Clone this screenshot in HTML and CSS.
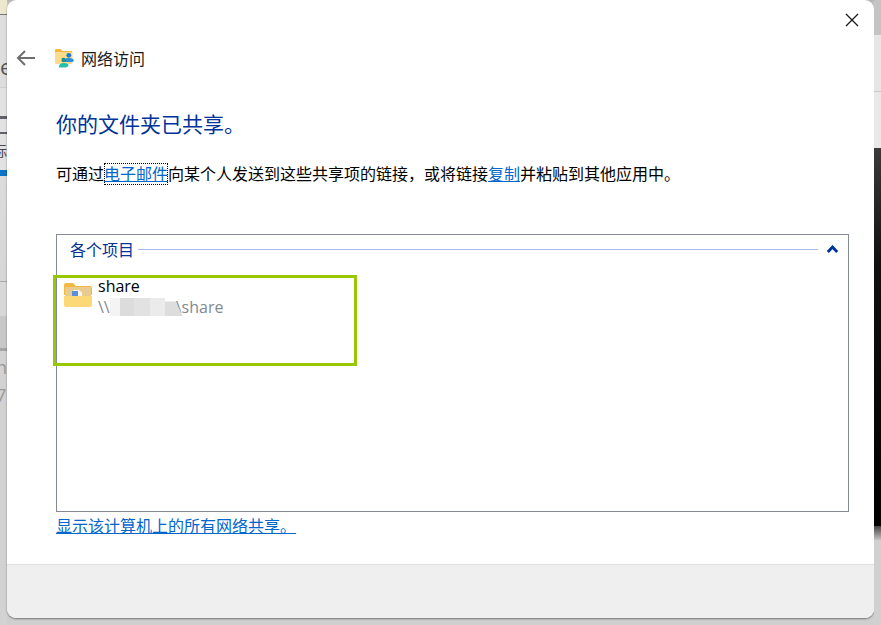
FILE: index.html
```html
<!DOCTYPE html>
<html lang="zh-CN">
<head>
    <meta charset="UTF-8">
    <title>网络访问</title>
    <link rel="stylesheet" href="styles.css">
</head>
<body>
    <div class="desktop">
        <div class="strip strip-left">
            <div class="band band-top"></div>
            <div class="band band-e"><span>e</span></div>
            <div class="band band-bars"></div>
            <div class="band band-char"><span>标</span></div>
            <div class="band band-blue"></div>
            <div class="band band-light"></div>
            <div class="band band-light2"></div>
            <div class="band band-mid"></div>
            <div class="band band-low"><span>n</span><span>7</span></div>
        </div>

        <div class="dialog">
            <div class="close-row">
                <svg class="close-icon" width="14" height="14" viewBox="0 0 14 14">
                    <path d="M1 1L13 13M13 1L1 13" stroke="#1a1a1a" stroke-width="1.3" fill="none"/>
                </svg>
            </div>
            <div class="nav">
                <svg class="back-icon" width="20" height="18" viewBox="0 0 20 18">
                    <path d="M9 2L2 9L9 16M2 9H19" stroke="#6e6e6e" stroke-width="2" fill="none"/>
                </svg>
                <svg class="nav-icon" width="20" height="20" viewBox="0 0 20 20">
                    <path d="M1 2Q1 1 2 1H6.500L8.500 3H18V5H1Z" fill="#f4b93c"/>
                    <path d="M1 4H18.500V14Q18.500 16 17 16H2.500Q1 16 1 14.500Z" fill="#fcdc8a"/>
                    <circle cx="14.800" cy="7.300" r="2.400" fill="#1f78d1"/>
                    <path d="M9.500 13.500Q9.500 10 14.800 10Q19.800 10 19.800 12.500Q19.800 14 17.500 14H11Z" fill="#2a8fd8"/>
                    <circle cx="9.600" cy="12" r="2.200" fill="#1f8f8f"/>
                    <path d="M5 19.500Q4.500 15 9.800 15Q15 15 14.500 17.500Q14 19.500 11 19.500Z" fill="#25bfae"/>
                </svg>
                <span class="nav-title">网络访问</span>
            </div>

            <div class="content">
                <h1 class="heading">你的文件夹已共享。</h1>
                <p class="intro">可通过<a class="link link-focus" href="#">电子邮件</a>向某个人发送到这些共享项的链接，或将链接<a class="link" href="#">复制</a>并粘贴到其他应用中。</p>

                <div class="group">
                    <div class="group-head">
                        <span class="group-title">各个项目</span>
                        <span class="group-line"></span>
                        <svg class="chevron" width="11" height="8" viewBox="0 0 11 8">
                            <path d="M0.800 7L5.500 2L10.200 7" stroke="#003399" stroke-width="2.800" fill="none"/>
                        </svg>
                    </div>
                    <div class="item">
                        <svg class="folder" width="28" height="24" viewBox="0 0 28 24">
                            <path d="M0 2Q0 0 2 0H9L12 3H26Q28 3 28 5V12H0Z" fill="#f3b744"/>
                            <rect x="1" y="4" width="26" height="10" fill="#e9cb8e"/>
                            <path d="M9 7H15L18 9.500V13H9Z" fill="#f7f4ea"/>
                            <rect x="8" y="8" width="6" height="5" fill="#5b8fe0"/>
                            <path d="M0 13H28V22Q28 24 26 24H2Q0 24 0 22Z" fill="#fdd877"/>
                        </svg>
                        <div class="item-text">
                            <div class="item-name">share</div>
                            <div class="item-path">\\<span class="redact"><i class="r1"></i><i class="r2"></i><i class="r3"></i><i class="r4"></i><i class="r5"></i></span>\share</div>
                        </div>
                    </div>
                    <div class="highlight"></div>
                </div>

                <a class="link link-all" href="#">显示该计算机上的所有网络共享。</a>
            </div>

            <div class="footer"></div>
        </div>

        <div class="strip strip-right">
            <div class="band r-top"></div>
            <div class="band r-light"></div>
            <div class="band r-light2"></div>
            <div class="band r-dark"></div>
            <div class="band r-fade"></div>
            <div class="band r-low"></div>
        </div>
    </div>
</body>
</html>
```

FILE: styles.css
```css
html, body {
    margin: 0;
    padding: 0;
}
body {
    font-family: "Open Sans", "Noto Sans CJK SC", sans-serif;
    font-size: 16px;
    background-color: #c6c6c6;
    color: #000;
    overflow: hidden;
}
.desktop {
    display: flex;
    width: 881px;
    height: 625px;
    overflow: hidden;
    background: linear-gradient(#b4b4b4, #cfcfcf 5px);
}
.strip {
    width: 7px;
    flex: none;
    height: 625px;
    display: flex;
    flex-direction: column;
    overflow: hidden;
}
.band {
    flex: none;
    overflow: hidden;
    line-height: 1;
}
.band-top {
    height: 14px;
    background-color: #ece8cf;
    border-bottom: 1px solid #777;
}
.band-e {
    height: 72px;
    padding-top: 40px;
    box-sizing: border-box;
    background-color: #dedede;
    color: #555;
    font-size: 22px;
}
.band-bars {
    height: 47px;
    box-sizing: border-box;
    background-color: #e2e2e2;
    border-top: 1px solid #cfcfcf;
    background-image: linear-gradient(#60606a, #60606a), linear-gradient(#60606a, #60606a);
    background-size: 100% 3px, 100% 3px;
    background-position: 0 28px, 0 44px;
    background-repeat: no-repeat;
}
.band-char {
    height: 36px;
    box-sizing: border-box;
    padding-top: 10px;
    background-color: #e2e2e2;
    color: #445;
    font-size: 14px;
}
.band-char span {
    display: block;
    margin-left: -7px;
}
.band-blue {
    height: 6px;
    background-color: #0a72c8;
}
.band-light {
    height: 105px;
    background: linear-gradient(#dcdcdc, #d6d6d6);
    border-bottom: 1px solid #aaa;
}
.band-light2 {
    height: 34px;
    background-color: #d8d8d8;
}
.band-mid {
    height: 32px;
    background-color: #c8c8c8;
}
.band-low {
    height: 100%;
    border-top: 3px solid #a4a4a4;
    padding-top: 7px;
    background-color: #d2d2d2;
    color: #999;
    font-size: 18px;
}
.band-low span {
    display: block;
    margin-bottom: 10px;
    margin-left: -4px;
}

.dialog {
    width: 867px;
    height: 618px;
    flex: none;
    box-sizing: border-box;
    display: flex;
    flex-direction: column;
    background-color: #fff;
    border-radius: 9px;
    box-shadow: 0 1px 2px rgba(0,0,0,0.45);
    overflow: hidden;
}
.close-row {
    height: 38px;
    display: flex;
    justify-content: flex-end;
    padding: 13px 15px 0 0;
    box-sizing: border-box;
}
.nav {
    height: 40px;
    display: flex;
    align-items: center;
    padding-left: 9px;
}
.back-icon {
    margin-right: 18px;
}
.nav-icon {
    margin-right: 7px;
}
.nav-title {
    color: #1a1a1a;
    font-size: 16px;
}
.content {
    flex: 1;
    padding: 0 25px 0 49px;
}
.heading {
    margin: 31px 0 0;
    height: 30px;
    line-height: 30px;
    color: #003399;
    font-size: 21px;
    font-weight: normal;
}
.intro {
    margin: 23px 0 0;
    height: 24px;
    line-height: 24px;
    white-space: nowrap;
}
.link {
    color: #0066cc;
    text-decoration: underline;
}
.link-focus {
    outline: 1px dotted #000;
    outline-offset: -1px;
}
.group {
    position: relative;
    margin-top: 48px;
    height: 278px;
    box-sizing: border-box;
    border: 1px solid #868a94;
}
.group-head {
    display: flex;
    align-items: center;
    height: 28px;
    padding-left: 13px;
}
.group-title {
    color: #003399;
    margin-right: 4px;
}
.group-line {
    flex: 1;
    height: 1px;
    background-color: #a6bbec;
}
.chevron {
    margin: 0 10px 0 9px;
}
.item {
    display: flex;
    margin: 13px 0 0 7px;
}
.folder {
    margin: 7px 6px 0 0;
}
.item-text {
    line-height: 21px;
}
.item-name {
    color: #000;
}
.item-path {
    display: flex;
    color: #84898f;
}
.redact {
    display: flex;
    width: 73px;
    height: 18px;
    margin: 1px -7px 0 0;
}
.redact i {
    display: block;
    height: 100%;
}
.r1 {
    width: 10px;
    background-color: #f4f4f4;
}
.r2 {
    width: 14px;
    background-color: #dcdcdc;
}
.r3 {
    width: 16px;
    background-color: #e2e2e2;
}
.r4 {
    width: 15px;
    background-color: #ebebeb;
}
.r5 {
    width: 18px;
    background-color: #dddddd;
    clip-path: polygon(0 20%, 60% 20%, 100% 100%, 0 100%);
}
.highlight {
    position: absolute;
    left: -4px;
    top: 40px;
    width: 298px;
    height: 85px;
    border: 3px solid #97c800;
}
.link-all {
    display: inline-block;
    margin-top: 3px;
    line-height: 22px;
}
.footer {
    height: 54px;
    flex: none;
    box-sizing: border-box;
    background-color: #efefef;
    border-top: 1px solid #dfdfdf;
}

.r-top {
    height: 35px;
    background-color: #c4c4c4;
}
.r-light {
    height: 56px;
    background-color: #e6e6e6;
    border-bottom: 1px solid #c8c8c8;
}
.r-light2 {
    height: 56px;
    background-color: #e8e8e8;
}
.r-dark {
    height: 378px;
    background: linear-gradient(#3a3a3a, #111 30%, #000);
}
.r-fade {
    height: 14px;
    background: linear-gradient(#444, #c4c4c4);
}
.r-low {
    height: 85px;
    background-color: #d0d0d0;
}
```
